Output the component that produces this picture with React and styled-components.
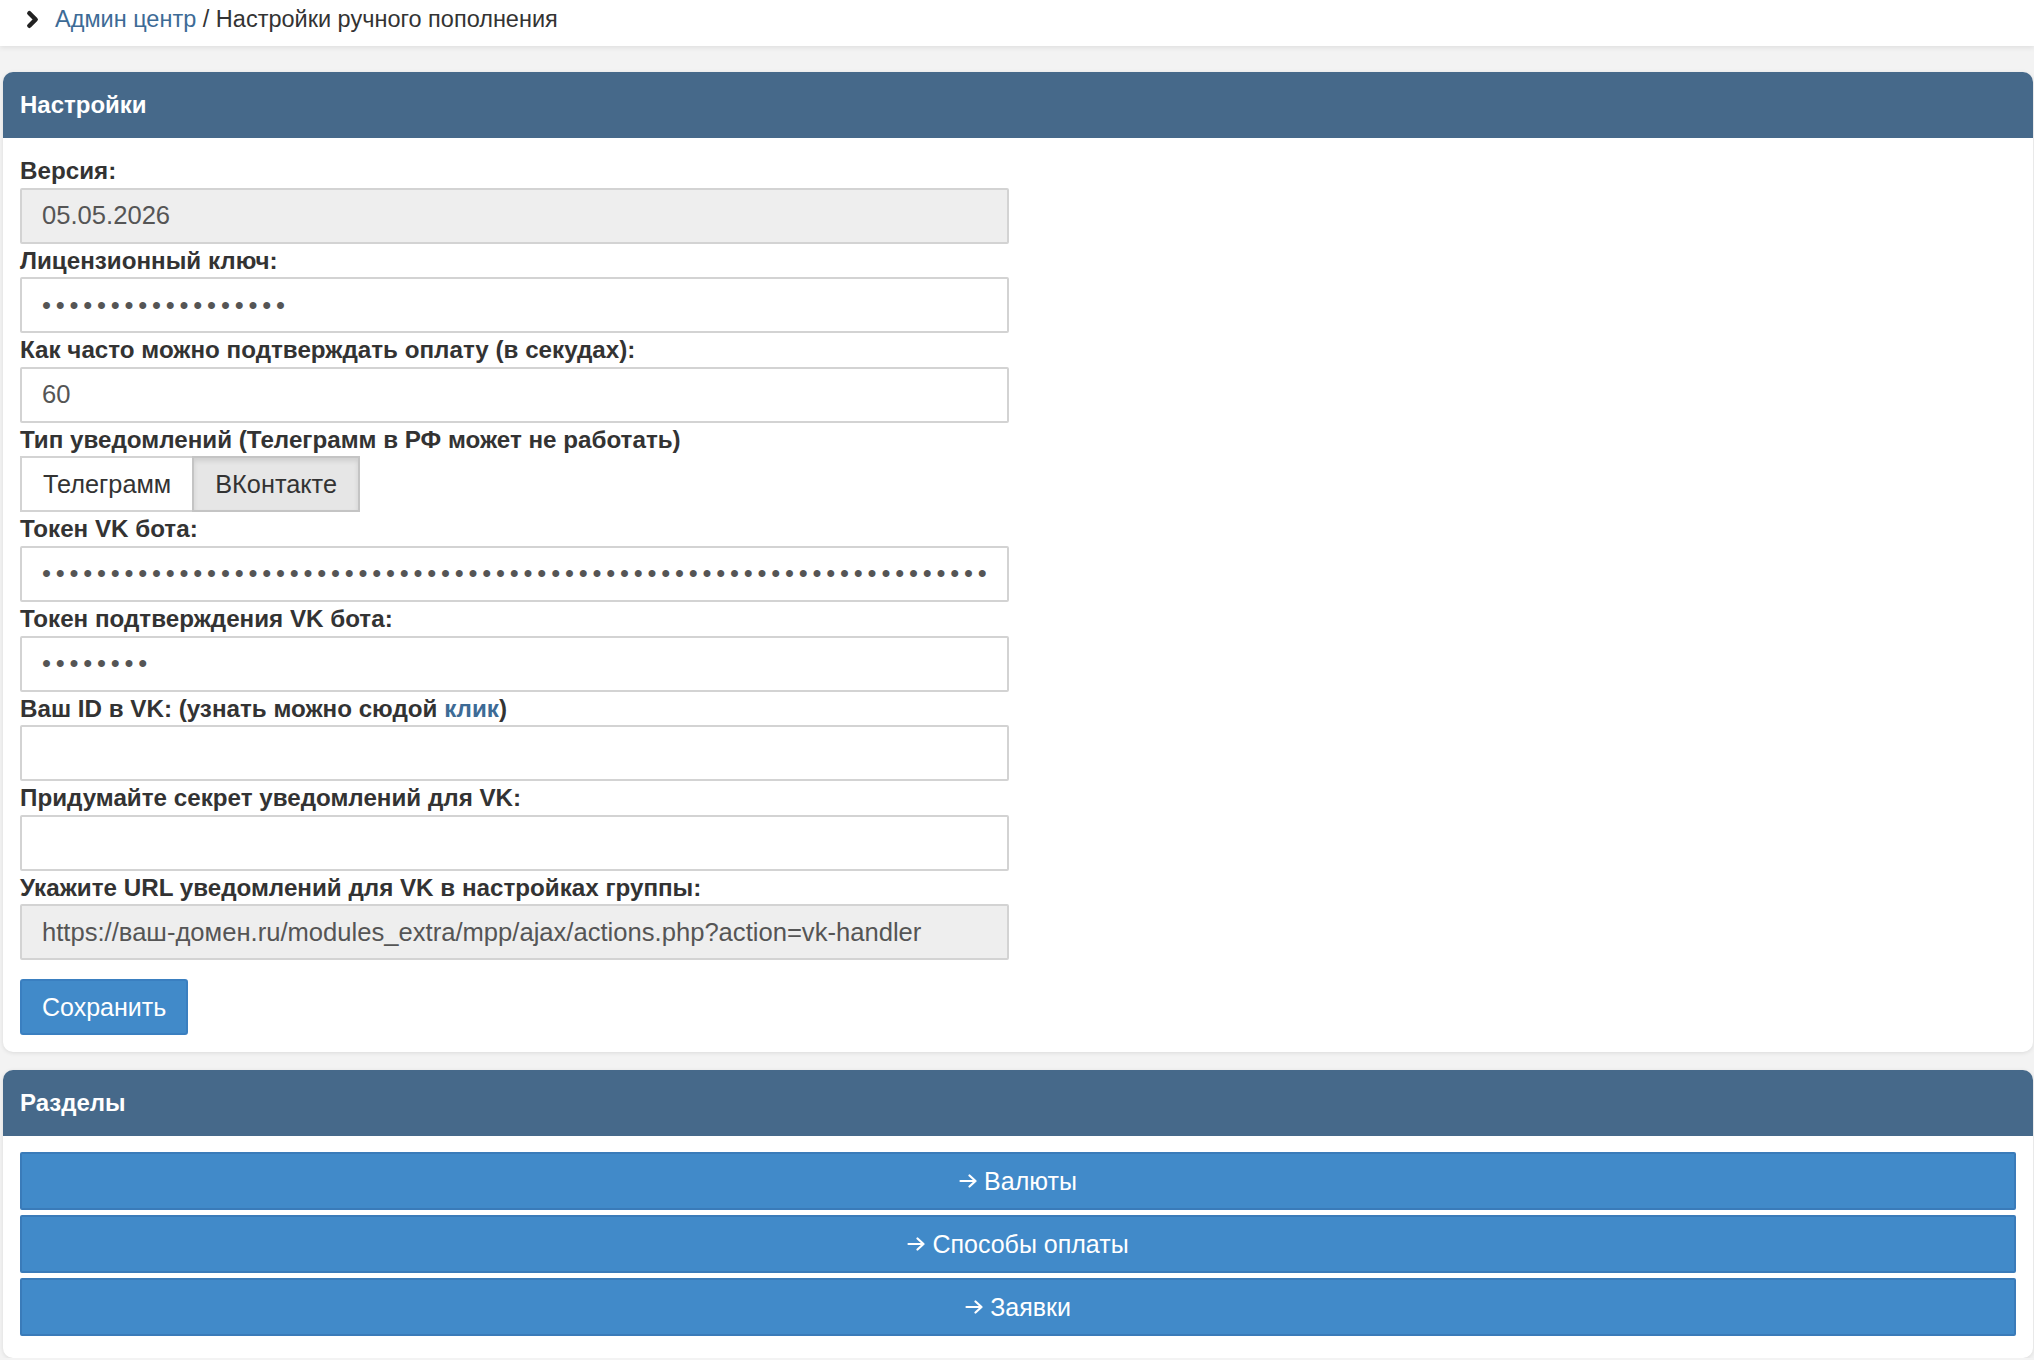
import React, { useState } from "react";
import styled, { createGlobalStyle } from "styled-components";
import { ChevronRight } from "lucide-react";

const GlobalStyle = createGlobalStyle`
  html, body {
    margin: 0;
    padding: 0;
    background: #f3f3f3;
    font-family: "Liberation Sans", Arial, Helvetica, sans-serif;
    color: #333;
  }
  * { box-sizing: border-box; }
`;

const TopBar = styled.header`
  height: 46px;
  background: #fff;
  box-shadow: 0 2px 5px rgba(0, 0, 0, 0.08);
  display: flex;
  align-items: center;
  padding-left: 20px;
  font-size: 23.5px;
  color: #333;
  position: relative;
  z-index: 1;
`;

const Crumbs = styled.nav`
  display: flex;
  align-items: center;
  gap: 10px;
  margin-top: -7px;
`;

const CrumbLink = styled.a`
  color: #3d6b96;
  text-decoration: none;
`;

const Main = styled.main`
  display: flex;
  flex-direction: column;
  gap: 18px;
  padding: 26px 1px 0 3px;
`;

const Panel = styled.section`
  background: #fff;
  border-radius: 10px;
  box-shadow: 0 1px 4px rgba(0, 0, 0, 0.1);
`;

const PanelHeader = styled.h2`
  margin: 0;
  height: 66px;
  display: flex;
  align-items: center;
  padding: 0 17px;
  background: #46698a;
  border-radius: 10px 10px 0 0;
  color: #fff;
  font-size: 24px;
  font-weight: bold;
`;

const PanelBody = styled.div`
  padding: 16px 17px 17px;
`;

const Form = styled.form`
  max-width: 989px;
  display: flex;
  flex-direction: column;
`;

const Label = styled.label`
  display: block;
  font-weight: bold;
  font-size: 24.2px;
  line-height: 33.6px;
  color: #333;
  white-space: nowrap;
`;

const Link = styled.a`
  color: #3d6b96;
  text-decoration: none;
`;

const Input = styled.input`
  display: block;
  width: 100%;
  height: 56px;
  margin: 0;
  padding: 0 20px;
  border: 2px solid #d3d3d3;
  border-radius: 2px;
  background: ${(p) => (p.readOnly ? "#eeeeee" : "#fff")};
  color: #555;
  font-family: inherit;
  font-size: 25.6px;
  letter-spacing: ${(p) => (p.type === "password" ? "4.8px" : "normal")};
  outline: none;
`;

const ToggleGroup = styled.div`
  display: inline-flex;
  align-self: flex-start;
`;

const ToggleButton = styled.button`
  height: 56px;
  padding: 0 21px;
  margin: 0;
  margin-left: ${(p) => (p.$first ? "0" : "-2px")};
  border: 2px solid ${(p) => (p.$active ? "#c4c4c4" : "#d3d3d3")};
  background: ${(p) => (p.$active ? "#e6e6e6" : "#fff")};
  box-shadow: ${(p) => (p.$active ? "inset 0 3px 5px rgba(0, 0, 0, 0.1)" : "none")};
  color: #333;
  font-family: inherit;
  font-size: 25.3px;
  cursor: pointer;
`;

const SaveButton = styled.button`
  align-self: flex-start;
  margin-top: 19px;
  height: 56px;
  padding: 0 20px;
  border: 2px solid #3a7fc0;
  border-radius: 3px;
  background: #418ac9;
  color: #fff;
  font-family: inherit;
  font-size: 25px;
  cursor: pointer;
`;

const SectionList = styled.div`
  display: flex;
  flex-direction: column;
  gap: 5px;
  padding-bottom: 5px;
`;

const SectionLink = styled.a`
  height: 58px;
  display: flex;
  align-items: center;
  justify-content: center;
  gap: 7px;
  background: #418ac9;
  border: 2px solid #3a7bb9;
  border-radius: 2px;
  color: #fff;
  font-size: 25px;
  text-decoration: none;
`;

const ArrowIcon = () => (
  <svg width="18" height="14" viewBox="0 0 18 14" fill="none" stroke="#fff"
    strokeWidth="2.2" strokeLinecap="round" strokeLinejoin="round" aria-hidden="true">
    <path d="M1.5 7h15M10.5 1.5 16.5 7l-6 5.5" />
  </svg>
);

const fields = [
  { label: "Лицензионный ключ:", type: "password", value: "a".repeat(18) },
  { label: "Как часто можно подтверждать оплату (в секудах):", type: "text", value: "60" },
];

const vkFields = [
  { label: "Токен VK бота:", type: "password", value: "x".repeat(90) },
  { label: "Токен подтверждения VK бота:", type: "password", value: "x".repeat(8) },
];

const sections = ["Валюты", "Способы оплаты", "Заявки"];

export default function App() {
  const [channel, setChannel] = useState("vk");

  return (
    <>
      <GlobalStyle />
      <TopBar>
        <Crumbs>
          <ChevronRight size={25} strokeWidth={4.4} color="#222" />
          <span>
            <CrumbLink href="#">Админ центр</CrumbLink> / Настройки ручного пополнения
          </span>
        </Crumbs>
      </TopBar>
      <Main>
        <Panel>
          <PanelHeader>Настройки</PanelHeader>
          <PanelBody>
            <Form onSubmit={(e) => e.preventDefault()}>
              <Label>Версия:</Label>
              <Input readOnly defaultValue="05.05.2026" />
              {fields.map((f) => (
                <React.Fragment key={f.label}>
                  <Label>{f.label}</Label>
                  <Input type={f.type} defaultValue={f.value} />
                </React.Fragment>
              ))}
              <Label>Тип уведомлений (Телеграмм в РФ может не работать)</Label>
              <ToggleGroup>
                <ToggleButton
                  type="button"
                  $first
                  $active={channel === "tg"}
                  onClick={() => setChannel("tg")}
                >
                  Телеграмм
                </ToggleButton>
                <ToggleButton
                  type="button"
                  $active={channel === "vk"}
                  onClick={() => setChannel("vk")}
                >
                  ВКонтакте
                </ToggleButton>
              </ToggleGroup>
              {vkFields.map((f) => (
                <React.Fragment key={f.label}>
                  <Label>{f.label}</Label>
                  <Input type={f.type} defaultValue={f.value} />
                </React.Fragment>
              ))}
              <Label>
                Ваш ID в VK: (узнать можно сюдой <Link href="#">клик</Link>)
              </Label>
              <Input type="text" defaultValue="" />
              <Label>Придумайте секрет уведомлений для VK:</Label>
              <Input type="text" defaultValue="" />
              <Label>Укажите URL уведомлений для VK в настройках группы:</Label>
              <Input
                readOnly
                defaultValue="https://ваш-домен.ru/modules_extra/mpp/ajax/actions.php?action=vk-handler"
              />
              <SaveButton type="submit">Сохранить</SaveButton>
            </Form>
          </PanelBody>
        </Panel>
        <Panel>
          <PanelHeader>Разделы</PanelHeader>
          <PanelBody>
            <SectionList>
              {sections.map((s) => (
                <SectionLink key={s} href="#">
                  <ArrowIcon />
                  {s}
                </SectionLink>
              ))}
            </SectionList>
          </PanelBody>
        </Panel>
      </Main>
    </>
  );
}
